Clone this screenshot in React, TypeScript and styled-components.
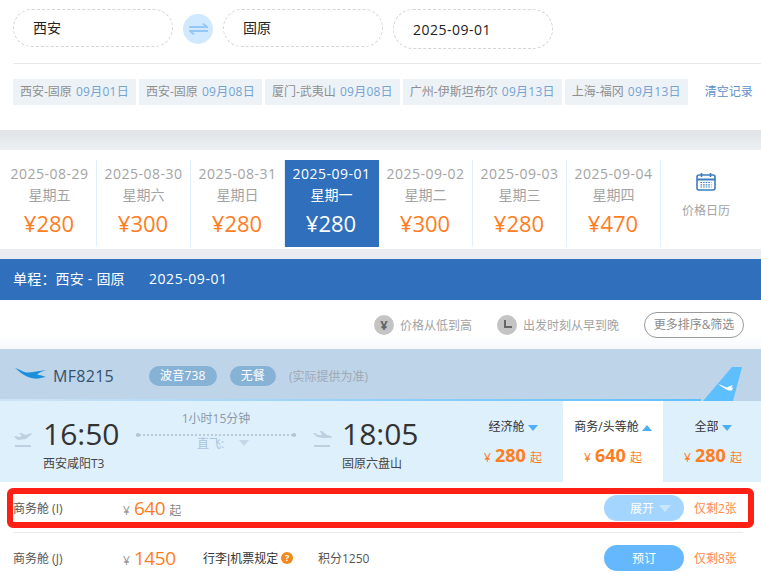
import styled, { createGlobalStyle } from "styled-components";

const GlobalStyle = createGlobalStyle`
	html, body {
		margin: 0;
		padding: 0;
		background: #fff;
		overflow: hidden;
	}
	body {
		font-family: "Open Sans", "Noto Sans CJK SC", sans-serif;
		color: #333;
	}
	* {
		box-sizing: border-box;
	}
`;

const Page = styled.div`
	width: 761px;
	height: 578px;
	overflow: hidden;
	position: relative;
`;

const SearchRow = styled.div`
	display: flex;
	align-items: flex-start;
	padding: 9px 0 0 13px;
	height: 63px;
`;

const CityInput = styled.div<{ $wide?: boolean }>`
	width: 160px;
	height: ${(p) => (p.$wide ? "40px" : "38px")};
	border: 1px dashed #d5d5d5;
	border-radius: 20px;
	padding-left: 19px;
	font-size: 14px;
	line-height: ${(p) => (p.$wide ? "39px" : "36px")};
	color: #222;
	margin-left: ${(p) => (p.$wide ? "10px" : "0")};
	letter-spacing: ${(p) => (p.$wide ? "0.5px" : "0")};
`;

const SwapButton = styled.div`
	width: 30px;
	height: 30px;
	margin: 5px 10px 0;
	border-radius: 50%;
	background: #d0e9ff;
	display: flex;
	align-items: center;
	justify-content: center;
`;

const Divider = styled.div`
	margin-left: 13px;
	height: 1px;
	background: #e9e9e9;
`;

const HistoryRow = styled.div`
	display: flex;
	align-items: flex-start;
	padding: 15px 0 0 13px;
	height: 66px;
	gap: 3px;
	white-space: nowrap;
`;

const HistoryTag = styled.div`
	height: 26px;
	line-height: 26px;
	padding: 0 7px;
	background: #edf2f7;
	font-size: 12px;
	color: #8f8f8f;
	flex: none;

	& span {
		color: #74a3d2;
		margin-left: 1px;
		letter-spacing: 0.25px;
	}
`;

const ClearLink = styled.div`
	font-size: 12px;
	line-height: 26px;
	color: #5c8fcb;
	margin-left: 14px;
`;

const GrayBand = styled.div`
	height: 20px;
	background: linear-gradient(#e1e3e6, #ecf0f4);
`;

const DateBar = styled.div`
	display: flex;
	height: 99px;
	padding: 10px 0 2px 3px;
	background: #fff;
`;

const DateCell = styled.div<{ $active?: boolean }>`
	width: 94px;
	height: 87px;
	text-align: center;
	flex: none;
	padding-top: 3px;
	background: ${(p) => (p.$active ? "#2f6fbc" : "#fff")};
	border-right: 1px solid ${(p) => (p.$active ? "#2f6fbc" : "#e1f0fd")};
	color: ${(p) => (p.$active ? "#fff" : "#a3a3a3")};
	font-size: 14px;
	line-height: 21px;
`;

const CellDate = styled.div`
	letter-spacing: 0.5px;
`;

const CellPrice = styled.div<{ $active?: boolean }>`
	font-size: 22px;
	line-height: 30px;
	margin-top: 3px;
	margin-right: 1px;
	color: ${(p) => (p.$active ? "#fff" : "#ff7d1e")};
`;

const CalendarCell = styled.div`
	width: 90px;
	height: 87px;
	display: flex;
	flex-direction: column;
	align-items: center;
	padding-top: 13px;
	font-size: 12px;
	color: #a3a3a3;
	gap: 10px;
`;

const ThinBand = styled.div`
	height: 10px;
	background: #e9edf2;
`;

const RouteBar = styled.div`
	height: 41px;
	background: #2f6fbc;
	color: #fff;
	font-size: 14px;
	line-height: 40px;
	padding-left: 13px;
	display: flex;
	gap: 24px;
`;

const RouteName = styled.span`
	width: 112px;
	white-space: nowrap;
	letter-spacing: 0.2px;
`;

const RouteDate = styled.span`
	letter-spacing: 0.55px;
`;

const SortRow = styled.div`
	height: 50px;
	background: linear-gradient(#fff 70%, #f6f8fa);
	border-bottom: 1px solid #bcd3e8;
	display: flex;
	align-items: center;
	justify-content: flex-end;
	padding: 0 17px 0 0;
	font-size: 12px;
	color: #a3a3a3;
`;

const SortItem = styled.div`
	display: flex;
	align-items: center;
	gap: 6px;
	margin-right: 25px;
`;

const SortIcon = styled.div`
	width: 20px;
	height: 20px;
	border-radius: 50%;
	background: #c4c4c4;
	display: flex;
	align-items: center;
	justify-content: center;
	color: #666;
	font-size: 13px;
	font-weight: 700;
`;

const MoreButton = styled.div`
	width: 100px;
	height: 26px;
	border: 1px solid #9a9a9a;
	border-radius: 13px;
	text-align: center;
	line-height: 24px;
	color: #8a8a8a;
`;

const FlightHeader = styled.div`
	height: 51px;
	background: #bed4e9;
	border-bottom: 2px solid;
	border-image: linear-gradient(to right, #cfe4f6, #5ebfff 92%, #bed4e9 92%) 1;
	display: flex;
	align-items: center;
	padding: 3px 0 0 15px;
	position: relative;
`;

const Logo = styled.svg`
	margin-bottom: 6px;
`;

const FlightNo = styled.div`
	font-size: 16px;
	color: #34516f;
	margin: 0 35px 0 7px;
	letter-spacing: 0.3px;
`;

const Pill = styled.div`
	height: 20px;
	line-height: 20px;
	padding: 0 11px;
	border-radius: 10px;
	background: #86b2d6;
	color: #fff;
	font-size: 12px;
	margin-right: 13px;
	letter-spacing: 0.2px;
`;

const HeaderNote = styled.div`
	font-size: 12px;
	color: #9ea9b4;
`;

const TailFin = styled.svg`
	position: absolute;
	right: 19px;
	bottom: -2px;
`;

const FlightBody = styled.div`
	height: 81px;
	background: #dff0fd;
	display: flex;
`;

const Endpoint = styled.div<{ $first?: boolean }>`
	display: flex;
	align-items: flex-start;
	padding-top: 15px;
	padding-left: ${(p) => (p.$first ? "14px" : "0")};
	gap: 9px;
`;

const PlaneBox = styled.div`
	padding-top: 14px;
`;

const TimeBlock = styled.div`
	width: 79px;
	font-size: 12px;
	color: #444;
	line-height: 16px;
	white-space: nowrap;
`;

const BigTime = styled.div`
	font-size: 30px;
	line-height: 36px;
	color: #333;
	margin-bottom: 4px;
`;

const Middle = styled.div`
	width: 160px;
	margin: 0 17px 0 14px;
	text-align: center;
	font-size: 12px;
	padding-top: 8px;
	color: #8b9aa8;
`;

const DotLine = styled.div`
	margin: 7px 0 0;
	height: 0;
	border-top: 2px dotted #bccbd9;
	position: relative;
	&::before,
	&::after {
		content: "";
		position: absolute;
		top: -3px;
		width: 4px;
		height: 4px;
		border-radius: 50%;
		background: #b4c4d2;
	}
	&::before {
		left: 0;
	}
	&::after {
		right: 0;
	}
`;

const Direct = styled.div`
	color: #a9c4dc;
	display: flex;
	justify-content: center;
	align-items: center;
	gap: 12px;
	margin-top: -2px;
	padding-left: 14px;
`;

const CabinTabs = styled.div`
	margin-left: auto;
	margin-right: -2px;
	display: flex;
`;

const CabinTab = styled.div<{ $active?: boolean }>`
	width: 100px;
	height: 81px;
	background: ${(p) => (p.$active ? "#fff" : "transparent")};
	text-align: center;
	padding-top: 16px;
	font-size: 12px;
	color: #333;
`;

const Triangle = styled.span<{ $up?: boolean; $color?: string; $gap?: number; $half?: number }>`
	display: inline-block;
	width: 0;
	height: 0;
	margin-left: ${(p) => p.$gap ?? 3}px;
	border-left: ${(p) => p.$half ?? 5}px solid transparent;
	border-right: ${(p) => p.$half ?? 5}px solid transparent;
	${(p) =>
		p.$up
			? `border-bottom: 6px solid ${p.$color ?? "#4eaefc"};`
			: `border-top: ${p.$half ? p.$half + 1 : 6}px solid ${p.$color ?? "#4eaefc"};`}
`;

const TabPrice = styled.div`
	color: #ff7d1e;
	font-size: 12px;
	margin-top: 7px;
	line-height: 26px;

	& b {
		font-size: 18px;
		margin: 0 4px;
	}
`;

const Row = styled.div<{ $line?: boolean }>`
	height: ${(p) => (p.$line ? "51px" : "49px")};
	padding-top: ${(p) => (p.$line ? "2px" : "0")};
	margin-left: 13px;
	margin-right: 18px;
	display: flex;
	align-items: center;
	font-size: 12px;
	color: #555;
	border-bottom: ${(p) => (p.$line ? "1px solid #eaeaea" : "none")};
`;

const CabinName = styled.div`
	width: 110px;
`;

const Yen = styled.span`
	color: #999;
	margin-right: 4px;
`;

const RowPrice = styled.span`
	font-size: 19px;
	letter-spacing: -0.4px;
	color: #ff7d1e;
	margin-right: 4px;
`;

const PriceWrap = styled.div<{ $w: number }>`
	width: ${(p) => p.$w}px;
	flex: none;
	color: #888;
`;

const Rules = styled.div`
	display: flex;
	align-items: center;
	gap: 3px;
	color: #333;
	width: 115px;
`;

const Bar = styled.span`
	font-family: "Liberation Sans", sans-serif;
`;

const Help = styled.span`
	width: 12px;
	height: 12px;
	border-radius: 50%;
	background: #f18a1c;
	color: #fff;
	font-size: 9px;
	font-weight: 700;
	text-align: center;
	line-height: 12px;
`;

const BookButton = styled.div<{ $light?: boolean }>`
	width: 80px;
	height: 26px;
	border-radius: 13px;
	margin-left: auto;
	padding-left: ${(p) => (p.$light ? "13px" : "0")};
	background: ${(p) => (p.$light ? "#a3d5fe" : "#66b8fe")};
	color: #fff;
	font-size: 12px;
	display: flex;
	align-items: center;
	justify-content: center;
`;

const Left = styled.div`
	margin-left: 10px;
	width: 49px;
	color: #ff8a4a;
	white-space: nowrap;
`;

const Highlight = styled.div`
	position: absolute;
	left: 7px;
	top: 488px;
	width: 747px;
	height: 40px;
	border: 6px solid #ff2015;
	border-radius: 6px;
`;

const dates = [
	{ d: "2025-08-29", w: "星期五", p: "¥280" },
	{ d: "2025-08-30", w: "星期六", p: "¥300" },
	{ d: "2025-08-31", w: "星期日", p: "¥280" },
	{ d: "2025-09-01", w: "星期一", p: "¥280", active: true },
	{ d: "2025-09-02", w: "星期二", p: "¥300" },
	{ d: "2025-09-03", w: "星期三", p: "¥280" },
	{ d: "2025-09-04", w: "星期四", p: "¥470" },
];

const history = [
	["西安-固原", "09月01日"],
	["西安-固原", "09月08日"],
	["厦门-武夷山", "09月08日"],
	["广州-伊斯坦布尔", "09月13日"],
	["上海-福冈", "09月13日"],
];

function PlaneIcon({ landing }: { landing?: boolean }) {
	return (
		<svg width="20" height="18" viewBox="0 0 20 18" fill="#bdd0e0">
			<path
				d={
					landing
						? "M0 3l2 0 3 2 4 0-2-4 2 0 5 4 4 1c1 .5 1 1.5 0 2l-8 0-6-1z"
						: "M0 7l2-1 3 1 3-1-3-3 2 0 5 2 5-2 1 1-6 5-8 1z"
				}
			/>
			<rect x="1" y="15" width="16" height="2" />
		</svg>
	);
}

export default function App() {
	return (
		<Page>
			<GlobalStyle />
			<SearchRow>
				<CityInput>西安</CityInput>
				<SwapButton>
					<svg width="19" height="12" viewBox="0 0 19 12" fill="none" stroke="#93c8f5" strokeWidth="1.8">
						<path d="M0 4h18L14 .5" />
						<path d="M19 8H1l4 3.5" />
					</svg>
				</SwapButton>
				<CityInput>固原</CityInput>
				<CityInput $wide>2025-09-01</CityInput>
			</SearchRow>
			<Divider />
			<HistoryRow>
				{history.map(([route, day]) => (
					<HistoryTag key={route + day}>
						{route} <span>{day}</span>
					</HistoryTag>
				))}
				<ClearLink>清空记录</ClearLink>
			</HistoryRow>
			<GrayBand />
			<DateBar>
				{dates.map((item) => (
					<DateCell key={item.d} $active={item.active}>
						<CellDate>{item.d}</CellDate>
						<div>{item.w}</div>
						<CellPrice $active={item.active}>{item.p}</CellPrice>
					</DateCell>
				))}
				<CalendarCell>
					<svg width="20" height="18" viewBox="0 0 20 18" fill="none">
						<rect x="1" y="2" width="18" height="15" rx="2" stroke="#3d7dc0" strokeWidth="1.6" />
						<path d="M1 6.5h18" stroke="#3d7dc0" strokeWidth="2" />
						<path d="M5.5 0v4M14.5 0v4" stroke="#3d7dc0" strokeWidth="1.6" />
						<path d="M4.5 9.5h11M4.5 11.8h11M4.5 14h11" stroke="#3d7dc0" strokeWidth="1.2" strokeDasharray="1.6 1" />
					</svg>
					价格日历
				</CalendarCell>
			</DateBar>
			<ThinBand />
			<RouteBar>
				<RouteName>单程：西安 - 固原</RouteName>
				<RouteDate>2025-09-01</RouteDate>
			</RouteBar>
			<SortRow>
				<SortItem>
					<SortIcon>¥</SortIcon>
					价格从低到高
				</SortItem>
				<SortItem>
					<SortIcon>
						<svg width="12" height="12" viewBox="0 0 12 12" fill="#666">
							<path d="M3 1h2v6h6v2H3z" />
						</svg>
					</SortIcon>
					出发时刻从早到晚
				</SortItem>
				<MoreButton>更多排序&amp;筛选</MoreButton>
			</SortRow>
			<FlightHeader>
				<Logo width="31" height="11" viewBox="0 0 31 11" fill="#1a8fdc">
					<path d="M0 0C4 1 7 3.500 11 4.500 16 5 24 3 31 2 27 3 24 5 22 6.500 25 7 28 8 31 9 26 10 23 11 19 10.500 12 10 6 5 0 0z" />
				</Logo>
				<FlightNo>MF8215</FlightNo>
				<Pill>波音738</Pill>
				<Pill>无餐</Pill>
				<HeaderNote>(实际提供为准)</HeaderNote>
				<TailFin width="39" height="34" viewBox="0 0 39 34">
					<path d="M0 34L29 0h10l-9 34z" fill="#5ebfff" />
					<path d="M15 17c3 .5 6 3 9 3.500 2-1 4-2 6-2.500l-2 2.500h2l-1 3h-3c-4-1-7-4-11-6.500z" fill="#fff" />
				</TailFin>
			</FlightHeader>
			<FlightBody>
				<Endpoint $first>
					<PlaneBox>
						<PlaneIcon />
					</PlaneBox>
					<TimeBlock>
						<BigTime>16:50</BigTime>
						西安咸阳T3
					</TimeBlock>
				</Endpoint>
				<Middle>
					1小时15分钟
					<DotLine />
					<Direct>
						直飞:
						<Triangle $color="#c5d6e6" />
					</Direct>
				</Middle>
				<Endpoint>
					<PlaneBox>
						<PlaneIcon landing />
					</PlaneBox>
					<TimeBlock>
						<BigTime>18:05</BigTime>
						固原六盘山
					</TimeBlock>
				</Endpoint>
				<CabinTabs>
					<CabinTab>
						经济舱
						<Triangle />
						<TabPrice>
							¥<b>280</b>起
						</TabPrice>
					</CabinTab>
					<CabinTab $active>
						商务/头等舱
						<Triangle $up />
						<TabPrice>
							¥<b>640</b>起
						</TabPrice>
					</CabinTab>
					<CabinTab>
						全部
						<Triangle />
						<TabPrice>
							¥<b>280</b>起
						</TabPrice>
					</CabinTab>
				</CabinTabs>
			</FlightBody>
			<Row $line>
				<CabinName>商务舱 (I)</CabinName>
				<PriceWrap $w={180}>
					<Yen>¥</Yen>
					<RowPrice>640</RowPrice>起
				</PriceWrap>
				<BookButton $light>
					展开
					<Triangle $color="#c9e6fe" $gap={5} $half={6} />
				</BookButton>
				<Left>仅剩2张</Left>
			</Row>
			<Row>
				<CabinName>商务舱 (J)</CabinName>
				<PriceWrap $w={80}>
					<Yen>¥</Yen>
					<RowPrice>1450</RowPrice>
				</PriceWrap>
				<Rules>
					<span>
						行李<Bar>|</Bar>机票规定
					</span>
					<Help>?</Help>
				</Rules>
				<span>积分1250</span>
				<BookButton>预订</BookButton>
				<Left>仅剩8张</Left>
			</Row>
			<Highlight />
		</Page>
	);
}
